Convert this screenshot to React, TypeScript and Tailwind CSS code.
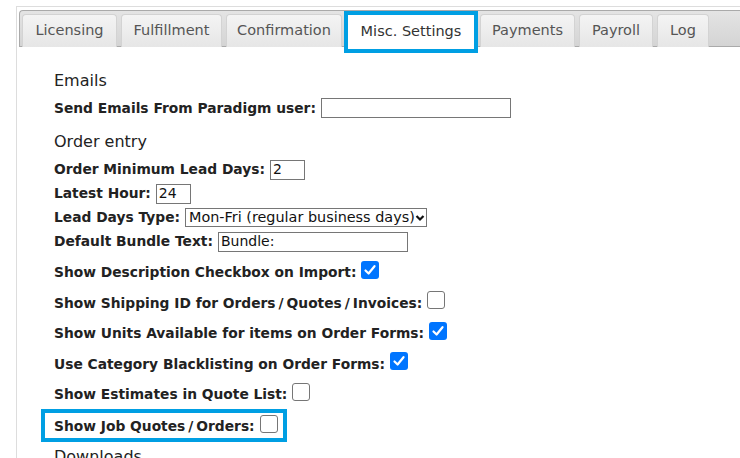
import React from 'react'

const tabs: [string, string][] = [
  ['Licensing', 'w-[95px]'],
  ['Fulfillment', 'w-[101px]'],
  ['Confirmation', 'w-[116px]'],
  ['Misc. Settings', 'w-[134px]'],
  ['Payments', 'w-[95px]'],
  ['Payroll', 'w-[74px]'],
  ['Log', 'w-[52px]'],
]
const active = 'Misc. Settings'

function Check({ on }: { on: boolean }) {
  if (on) {
    return (
      <span className="inline-flex w-[18px] h-[18px] rounded-[3px] bg-[#0075ff] items-center justify-center mb-[6px]">
        <svg width="14" height="14" viewBox="0 0 14 14">
          <path d="M2.5 7.5 L5.6 10.5 L11.5 3.2" fill="none" stroke="white" strokeWidth="2.2" strokeLinecap="round" strokeLinejoin="round" />
        </svg>
      </span>
    )
  }
  return <span className="inline-block w-[18px] h-[18px] rounded-[3px] border border-[#767676] bg-white mb-[6px]" />
}

// the slash in these labels is wider in the original font
function Label({ text }: { text: string }) {
  const parts = text.split('/')
  return (
    <span className="font-bold text-[13.8px] text-[#222] whitespace-nowrap">
      {parts.map((p, i) => (
        <React.Fragment key={i}>
          {i > 0 && <span className="px-[3px]">/</span>}
          {p}
        </React.Fragment>
      ))}
    </span>
  )
}

function Row({ label, children, tall }: { label: string; children: React.ReactNode; tall?: boolean }) {
  return (
    <div className={`flex items-center gap-[5px] ${tall ? 'h-[30.5px]' : 'h-[24px]'}`}>
      <Label text={label} />
      {children}
    </div>
  )
}

function TextBox({ w, value }: { w: string; value?: string }) {
  return (
    <span className={`inline-flex items-center h-[20px] border border-[#767676] px-[2px] text-[14px] text-[#111] bg-white ${w}`}>
      {value}
    </span>
  )
}

export default function App() {
  return (
    <div className="w-[740px] h-[458px] overflow-hidden bg-white pt-[6px] pl-[16px] font-['DejaVu_Sans',Verdana,sans-serif]">
      <div className="h-full border-l border-t border-[#dddddd] pl-[2px] pt-[3px]">
        <div className="h-[37px] flex items-end gap-[4px] pl-[2px] border border-[#aaaaaa] border-r-0 rounded-tl-[4px] bg-gradient-to-b from-[#e4e4e4] to-[#d4d4d4]">
          {tabs.map(([t, w]) =>
            t === active ? (
              <div
                key={t}
                className={`relative z-10 h-[42px] -mb-[7px] -mx-[2px] shrink-0 flex items-center justify-center whitespace-nowrap border-4 border-[#009fe3] bg-white text-[14.5px] text-[#333] ${w}`}
              >
                {t}
              </div>
            ) : (
              <div
                key={t}
                className={`h-[33px] -mb-px shrink-0 flex items-center justify-center whitespace-nowrap rounded-t-[4px] border border-b-0 border-[#d3d3d3] bg-gradient-to-b from-[#f4f4f4] to-[#e6e6e6] text-[14.5px] text-[#555] ${w}`}
              >
                {t}
              </div>
            )
          )}
        </div>

        <div className="pl-[35px] pt-[22px] text-[#222]">
          <div className="h-[24px] flex items-center text-[16px]">Emails</div>
          <Row label="Send Emails From Paradigm user:" tall>
            <TextBox w="w-[190px]" />
          </Row>
          <div className="h-[24px] mt-[6px] flex items-center text-[16px]">Order entry</div>
          <div className="mt-[4px]">
            <Row label="Order Minimum Lead Days:">
              <TextBox w="w-[35px]" value="2" />
            </Row>
            <Row label="Latest Hour:">
              <TextBox w="w-[35px]" value="24" />
            </Row>
            <Row label="Lead Days Type:">
              <span className="inline-flex items-center h-[19px] w-[242px] border border-[#767676] pl-[3px] pr-[1px] text-[14.4px] text-[#111] bg-white">
                <span className="flex-1 whitespace-nowrap overflow-hidden">Mon-Fri (regular business days)</span>
                <svg width="10" height="10" viewBox="0 0 10 10">
                  <path d="M1.5 3 L5 6.5 L8.5 3" fill="none" stroke="#111" strokeWidth="2.2" />
                </svg>
              </span>
            </Row>
            <Row label="Default Bundle Text:">
              <TextBox w="w-[190px]" value="Bundle:" />
            </Row>
          </div>
          <div className="mt-[4px]">
            <Row label="Show Description Checkbox on Import:" tall>
              <Check on />
            </Row>
            <Row label="Show Shipping ID for Orders/Quotes/Invoices:" tall>
              <Check on={false} />
            </Row>
            <Row label="Show Units Available for items on Order Forms:" tall>
              <Check on />
            </Row>
            <Row label="Use Category Blacklisting on Order Forms:" tall>
              <Check on />
            </Row>
            <Row label="Show Estimates in Quote List:" tall>
              <Check on={false} />
            </Row>
            <div className="-mt-[1px] -ml-[13px] w-[246px] h-[33px] pl-[9px] pt-[2px] border-4 border-[#009fe3] flex items-center gap-[5px]">
              <Label text="Show Job Quotes/Orders:" />
              <Check on={false} />
            </div>
          </div>
          <div className="h-[24px] mt-[3px] flex items-center text-[16px]">Downloads</div>
        </div>
      </div>
    </div>
  )
}
